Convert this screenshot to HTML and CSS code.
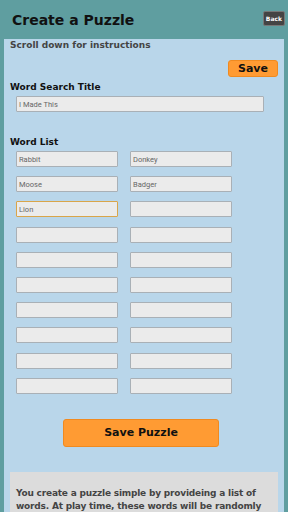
FILE: index.html
```html
<!DOCTYPE html>
<html lang="en">

<head>
    <meta charset="UTF-8">
    <meta name="viewport" content="width=device-width, initial-scale=1.0">
    <title>Create a Puzzle</title>
    <link rel="stylesheet" href="styles.css">
</head>

<body>
    <div class="header">
        <h1>Create a Puzzle</h1>
        <button class="back-btn">Back</button>
    </div>

    <div class="panel">
        <p class="hint">Scroll down for instructions</p>
        <div class="save-row">
            <button class="orange-btn save-btn">Save</button>
        </div>

        <h2>Word Search Title</h2>
        <input type="text" class="title-input" value="I Made This">

        <h2 class="list-label">Word List</h2>
        <div class="word-grid">
            <input type="text" value="Rabbit">
            <input type="text" value="Donkey">
            <input type="text" value="Moose">
            <input type="text" value="Badger">
            <input type="text" class="focused" value="Lion">
            <input type="text">
            <input type="text">
            <input type="text">
            <input type="text">
            <input type="text">
            <input type="text">
            <input type="text">
            <input type="text">
            <input type="text">
            <input type="text">
            <input type="text">
            <input type="text">
            <input type="text">
            <input type="text">
            <input type="text">
        </div>

        <div class="puzzle-row">
            <button class="orange-btn puzzle-btn">Save Puzzle</button>
        </div>

        <div class="instructions">
            You create a puzzle simple by provideing a list of words. At play time, these words will be randomly
            placed in the grid.
        </div>
    </div>
</body>

</html>
```

FILE: styles.css
```css
/* Create a Puzzle screen */
body {
    margin: 0;
    padding: 0;
    background: #5f9ea0;
    font-family: 'DejaVu Sans', sans-serif;
    color: #222;
    height: 512px;
    overflow: hidden;
}

.header {
    height: 39px;
    display: flex;
    align-items: center;
    justify-content: space-between;
    padding: 0 3px 0 12px;
    box-sizing: border-box;
}

.header h1 {
    margin: 0;
    font-size: 14px;
    font-weight: 700;
    color: #111;
    padding-top: 1px;
}

.back-btn {
    background: #444;
    color: #fff;
    border: 1px solid #777;
    border-radius: 2px;
    font-family: inherit;
    font-size: 6px;
    font-weight: 700;
    padding: 3px 2px;
    margin-top: -2px;
}

.panel {
    background: #b9d6ea;
    margin: 0 4px;
    padding: 0 6px;
    height: 473px;
    overflow: hidden;
}

.hint {
    margin: 0;
    padding-top: 1px;
    font-size: 9px;
    font-weight: 700;
    color: #444;
}

.save-row {
    display: flex;
    justify-content: flex-end;
    padding-top: 10px;
}

.orange-btn {
    background: #ff9b33;
    border: 1px solid #f08a20;
    border-radius: 3px;
    font-family: inherit;
    font-weight: 700;
    color: #111;
}

.save-btn {
    width: 50px;
    height: 17px;
    font-size: 11px;
    padding: 0;
}

.panel h2 {
    margin: 5px 0 0;
    font-size: 9px;
    font-weight: 700;
    color: #111;
}

input {
    display: block;
    box-sizing: border-box;
    height: 16px;
    background: #ebebeb;
    border: 1px solid #a9b0b6;
    border-radius: 1px;
    font-family: 'Roboto', sans-serif;
    font-size: 7.5px;
    color: #666;
    padding: 0 2px;
    outline: none;
}

.title-input {
    width: 248px;
    margin: 4px 0 0 6px;
}

.panel h2.list-label {
    margin-top: 25px;
}

.word-grid {
    display: grid;
    grid-template-columns: 102px 102px;
    column-gap: 12px;
    row-gap: 9.2px;
    margin: 4px 0 0 6px;
}

.word-grid input {
    width: 100%;
}

.word-grid .focused {
    border-color: #d9a54a;
}

.puzzle-row {
    display: flex;
    justify-content: center;
    padding-top: 25px;
    padding-right: 6px;
}

.puzzle-btn {
    width: 156px;
    height: 28px;
    font-size: 11px;
}

.instructions {
    margin-top: 25px;
    background: #dcdcdc;
    padding: 15px 6px 0;
    font-size: 9px;
    font-weight: 700;
    letter-spacing: -0.2px;
    color: #444;
    line-height: 13px;
    height: 60px;
}
```
